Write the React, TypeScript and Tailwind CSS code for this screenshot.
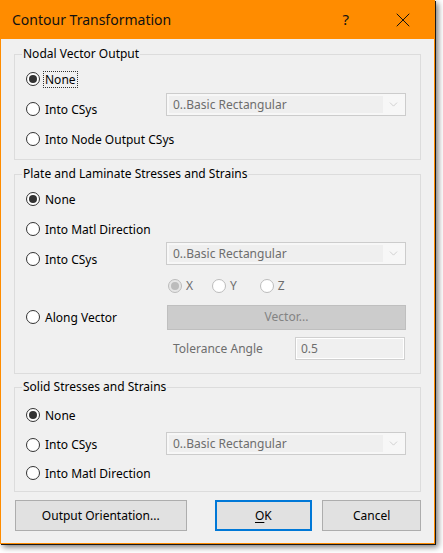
import { ChevronDown, X } from 'lucide-react'

const font = { fontFamily: '"Noto Sans", "Liberation Sans", sans-serif' }

function Radio({ checked = false, disabled = false }: { checked?: boolean; disabled?: boolean }) {
  return (
    <span
      className={`flex h-[14px] w-[14px] flex-shrink-0 items-center justify-center rounded-full border ${
        disabled ? 'border-[#bcbcbc]' : 'border-[#333333]'
      } ${disabled && checked ? 'bg-[#e6e6e6]' : 'bg-white'}`}
    >
      {checked && (
        <span className={`h-[8px] w-[8px] rounded-full ${disabled ? 'bg-[#bcbcbc]' : 'bg-[#333333]'}`} />
      )}
    </span>
  )
}

function Option({ label, checked, focus }: { label: string; checked?: boolean; focus?: boolean }) {
  return (
    <div className="flex items-center gap-[3px]">
      <Radio checked={checked} />
      <span className={`px-[1px] leading-[15px] ${focus ? 'border border-dotted border-[#333]' : 'border border-transparent'}`}>
        {label}
      </span>
    </div>
  )
}

function Combo({ className = '' }: { className?: string }) {
  return (
    <div className={`ml-auto flex h-[23px] w-[240px] items-stretch border border-[#cccccc] bg-[#f7f7f7] p-[2px] ${className}`}>
      <div className="flex flex-1 items-center bg-[#efefef] pl-[4px] text-[#6d6d6d]">0..Basic Rectangular</div>
      <div className="flex w-[20px] items-center justify-center text-[#bdbdbd]">
        <ChevronDown size={13} strokeWidth={1.2} />
      </div>
    </div>
  )
}

function Group({ title, children, className = '' }: { title: string; children: React.ReactNode; className?: string }) {
  return (
    <fieldset className={`border border-[#dcdcdc] pl-[11px] pr-[14px] ${className}`}>
      <legend className="-ml-[4px] px-[1px] leading-[16px]">{title}</legend>
      {children}
    </fieldset>
  )
}

export default function App() {
  return (
    <div className="h-[553px] w-[443px] bg-white text-[12px] text-black" style={font}>
      <div className="flex h-[544px] w-[435px] flex-col border border-[#ff8c00] bg-[#f0f0f0] shadow-[1px_1px_0_#1a1a1a,3px_3px_6px_rgba(0,0,0,0.55)]">
        <div className="-mx-px -mt-px flex h-[39px] flex-shrink-0 items-center bg-[#ff8c00] pl-[12px]">
          <span className="text-[14px] text-[#111]">Contour Transformation</span>
          <span className="ml-auto mr-[42px] text-[15px] text-[#111]">?</span>
          <span className="mr-[20px] flex items-center text-[#111]">
            <X size={24} strokeWidth={1} />
          </span>
        </div>

        <div className="flex flex-col px-[13px]">
          <Group title="Nodal Vector Output" className="mt-[7px] pb-[5px]">
            <div className="mt-[2px] flex h-[30px] items-center">
              <Option label="None" checked focus />
            </div>
            <div className="flex h-[30px] items-center">
              <Option label="Into CSys" />
              <Combo className="-mt-[1px] self-start" />
            </div>
            <div className="flex h-[30px] items-center">
              <Option label="Into Node Output CSys" />
            </div>
          </Group>

          <Group title="Plate and Laminate Stresses and Strains" className="mt-[6px] pb-[13px]">
            <div className="mt-[2px] flex h-[30px] items-center">
              <Option label="None" checked />
            </div>
            <div className="flex h-[30px] items-center">
              <Option label="Into Matl Direction" />
            </div>
            <div className="flex h-[30px] items-center">
              <Option label="Into CSys" />
              <Combo className="-mt-[2px] self-start" />
            </div>
            <div className="flex h-[24px] items-center pl-[142px] text-[#6d6d6d]">
              <div className="flex items-center gap-[4px]">
                <Radio checked disabled />
                <span>X</span>
              </div>
              <div className="ml-[19px] flex items-center gap-[4px]">
                <Radio disabled />
                <span>Y</span>
              </div>
              <div className="ml-[23px] flex items-center gap-[4px]">
                <Radio disabled />
                <span>Z</span>
              </div>
            </div>
            <div className="flex h-[38px] items-center">
              <Option label="Along Vector" />
              <div className="ml-auto flex h-[25px] w-[239px] items-center justify-center border border-[#bfbfbf] bg-[#cccccc] text-[#838383]">
                Vector...
              </div>
            </div>
            <div className="mt-[1px] flex h-[23px] items-center">
              <span className="ml-[147px] text-[#6d6d6d]">Tolerance Angle</span>
              <div className="ml-auto mr-[1px] flex h-[23px] w-[110px] items-center border border-[#d0d0d0] bg-[#f0f0f0] pl-[5px] text-[#6d6d6d] shadow-[inset_0_0_0_1px_#ffffff]">
                0.5
              </div>
            </div>
          </Group>

          <Group title="Solid Stresses and Strains" className="mt-[5px] pb-[4px]">
            <div className="mt-[5px] flex h-[30px] items-center">
              <Option label="None" checked />
            </div>
            <div className="flex h-[29px] items-center">
              <Option label="Into CSys" />
              <Combo className="mt-[2px] self-start" />
            </div>
            <div className="flex h-[28px] items-center">
              <Option label="Into Matl Direction" />
            </div>
          </Group>

          <div className="mt-[8px] flex h-[31px] pl-[1px]">
            <button className="w-[172px] border border-[#adadad] bg-[#e1e1e1]">Output Orientation...</button>
            <button className="ml-[28px] w-[98px] border-2 border-[#0078d7] bg-[#e1e1e1]">
              <span className="underline underline-offset-2">O</span>K
            </button>
            <button className="ml-[10px] w-[99px] border border-[#adadad] bg-[#e1e1e1]">Cancel</button>
          </div>
        </div>
      </div>
    </div>
  )
}
